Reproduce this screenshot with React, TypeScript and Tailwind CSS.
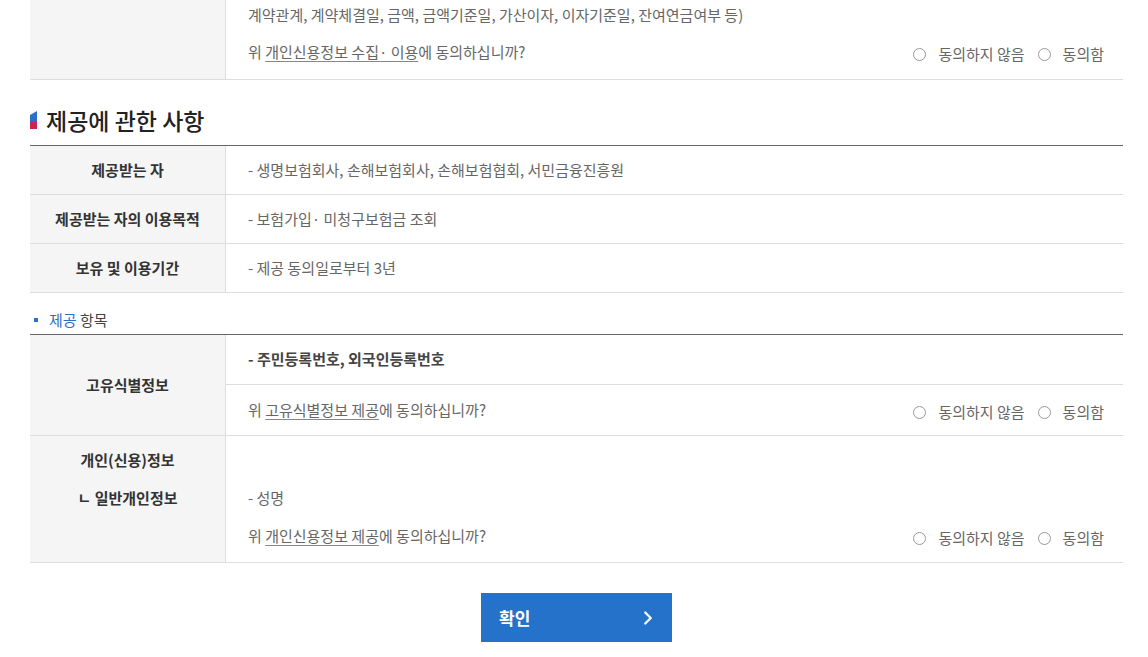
import { ChevronRight } from 'lucide-react'

const FONT = { fontFamily: '"Noto Sans CJK KR", "Noto Sans", sans-serif' }

function Radios() {
  return (
    <div className="flex items-center text-[15px] text-[#666] leading-[30px] pt-[2px]">
      <span className="w-[13px] h-[13px] rounded-full border border-[#999] bg-white" />
      <span className="ml-[12px]">동의하지 않음</span>
      <span className="ml-[13px] w-[13px] h-[13px] rounded-full border border-[#999] bg-white" />
      <span className="ml-[12px]">동의함</span>
    </div>
  )
}

function Question({ term }: { term: string }) {
  return (
    <div className="flex items-start justify-between h-[30px] leading-[30px]">
      <span>
        위 <span className="underline underline-offset-[3px] decoration-[#888]">{term}</span>에 동의하십니까?
      </span>
      <Radios />
    </div>
  )
}

const ROWS = [
  ['제공받는 자', '- 생명보험회사, 손해보험회사, 손해보험협회, 서민금융진흥원'],
  ['제공받는 자의 이용목적', '- 보험가입· 미청구보험금 조회'],
  ['보유 및 이용기간', '- 제공 동의일로부터 3년'],
]

export default function App() {
  return (
    <div className="min-h-screen bg-white text-[15px] text-[#666]" style={FONT}>
      <div className="ml-[30px] w-[1093px]">
        {/* previous section tail */}
        <div className="flex border-b border-[#ddd]">
          <div className="w-[196px] shrink-0 bg-[#f5f5f5] border-r border-[#ddd]" />
          <div className="flex-1 pl-[22px] pr-[19px] pb-[12px]">
            <div className="leading-[30px]">
              계약관계, 계약체결일, 금액, 금액기준일, 가산이자, 이자기준일, 잔여연금여부 등)
            </div>
            <div className="mt-[7px]">
              <Question term="개인신용정보 수집· 이용" />
            </div>
          </div>
        </div>

        {/* heading */}
        <div className="flex items-center mt-[25px] mb-[10px] h-[30px]">
          <svg width="7" height="18" viewBox="0 0 7 18" className="shrink-0">
            <polygon points="0,4 7,0 7,11 0,11" fill="#2a6fc9" />
            <polygon points="0,11 7,11 7,18 0,18" fill="#c8284c" />
          </svg>
          <h2 className="ml-[9px] text-[23px] font-medium text-[#222] leading-[30px]">제공에 관한 사항</h2>
        </div>

        <div className="border-t border-[#666]">
          {ROWS.map(([h, v]) => (
            <div key={h} className="flex border-b border-[#ddd] h-[49px]">
              <div className="w-[196px] shrink-0 bg-[#f5f5f5] border-r border-[#ddd] flex items-center justify-center font-bold text-[#333]">
                {h}
              </div>
              <div className="flex-1 pl-[22px] flex items-center">{v}</div>
            </div>
          ))}
        </div>

        <div className="pt-[16px] pb-[4px] flex items-center">
          <span className="ml-[4px] w-[4px] h-[4px] bg-[#2a6fc9]" />
          <span className="ml-[11px] text-[15px] leading-[21px] text-[#444]">
            <span className="text-[#2a6fc9]">제공</span> 항목
          </span>
        </div>

        <div className="border-t border-[#666]">
          <div className="flex border-b border-[#ddd]">
            <div className="w-[196px] shrink-0 bg-[#f5f5f5] border-r border-[#ddd] flex items-center justify-center font-bold text-[#333]">
              고유식별정보
            </div>
            <div className="flex-1">
              <div className="h-[50px] border-b border-[#ddd] pl-[22px] flex items-center font-bold text-[#444]">
                - 주민등록번호, 외국인등록번호
              </div>
              <div className="h-[50px] pl-[22px] pr-[19px] flex items-center">
                <div className="flex-1">
                  <Question term="고유식별정보 제공" />
                </div>
              </div>
            </div>
          </div>

          <div className="flex border-b border-[#ddd]">
            <div className="w-[196px] shrink-0 bg-[#f5f5f5] border-r border-[#ddd] pt-[5px] pb-[7px] font-bold text-[#333] text-center leading-[38px]">
              <div>개인(신용)정보</div>
              <div>ㄴ 일반개인정보</div>
            </div>
            <div className="flex-1 pl-[22px] pr-[19px] pt-[5px] pb-[7px] leading-[38px]">
              <div className="h-[38px]" />
              <div className="h-[38px]">- 성명</div>
              <div className="h-[38px] pt-[4px]">
                <Question term="개인신용정보 제공" />
              </div>
            </div>
          </div>
        </div>

        <div className="flex justify-center mt-[30px]">
          <button className="w-[191px] h-[49px] bg-[#2472c9] text-white flex items-center justify-between pl-[18px] pr-[13px]">
            <span className="text-[17px] font-bold">확인</span>
            <ChevronRight size={22} strokeWidth={2.5} />
          </button>
        </div>
      </div>
    </div>
  )
}
